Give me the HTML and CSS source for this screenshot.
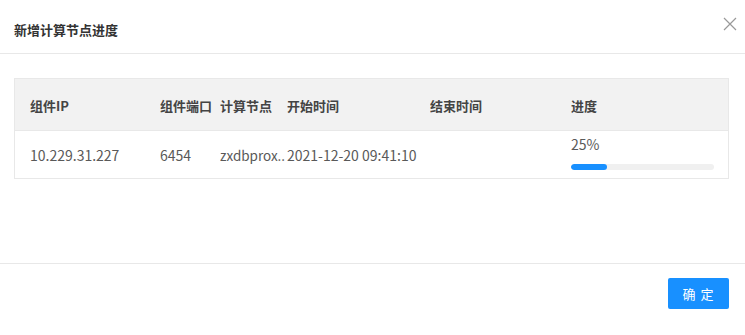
FILE: index.html
```html
<!DOCTYPE html>
<html lang="zh-CN">
<head>
  <meta charset="UTF-8">
  <meta name="viewport" content="width=device-width, initial-scale=1.0">
  <title>新增计算节点进度</title>
  <link rel="stylesheet" href="styles.css">
</head>
<body>
  <div class="dialog">
    <div class="dialog-header">
      <span class="dialog-title">新增计算节点进度</span>
      <button class="close" aria-label="close">
        <svg width="14" height="14" viewBox="0 0 14 14">
          <path d="M1 1 L13 13 M13 1 L1 13" stroke="#999" stroke-width="1.2" fill="none"/>
        </svg>
      </button>
    </div>
    <div class="dialog-body">
      <div class="table">
        <div class="tr thead">
          <div class="td c1">组件IP</div>
          <div class="td c2">组件端口</div>
          <div class="td c3">计算节点</div>
          <div class="td c4">开始时间</div>
          <div class="td c5">结束时间</div>
          <div class="td c6">进度</div>
        </div>
        <div class="tr tbody">
          <div class="td c1">10.229.31.227</div>
          <div class="td c2">6454</div>
          <div class="td c3">zxdbprox..</div>
          <div class="td c4">2021-12-20 09:41:10</div>
          <div class="td c5"></div>
          <div class="td c6 progress">
            <div class="percent">25%</div>
            <div class="bar"><div class="bar-fill" style="width: 25%"></div></div>
          </div>
        </div>
      </div>
    </div>
    <div class="dialog-footer">
      <button class="btn-primary">确 定</button>
    </div>
  </div>
</body>
</html>
```

FILE: styles.css
```css
body {
  margin: 0;
  font-family: "Noto Sans CJK SC", "Noto Sans", sans-serif;
  font-size: 13px;
  color: #555;
  background: #fff;
}

.dialog {
  width: 745px;
  height: 335px;
}

.dialog-header {
  height: 54px;
  display: flex;
  align-items: center;
  justify-content: space-between;
  padding: 0 8px 0 14px;
  border-bottom: 1px solid #e8e8e8;
  box-sizing: border-box;
}

.dialog-title {
  font-size: 13px;
  font-weight: bold;
  color: #333;
  margin-top: 6px;
}

.close {
  border: none;
  background: none;
  padding: 0;
  width: 14px;
  height: 14px;
  margin-bottom: 5px;
  cursor: pointer;
}

.dialog-body {
  padding: 24px 16px 0 14px;
  height: 210px;
  box-sizing: border-box;
  border-bottom: 1px solid #e8e8e8;
}

.table {
  border: 1px solid #e8e8e8;
}

.tr {
  display: grid;
  grid-template-columns: 145px 60px 67px 143px 141px 1fr;
  align-items: center;
  height: 47px;
}

.thead {
  height: 51px;
  background: #f2f2f2;
  border-bottom: 1px solid #e8e8e8;
  font-weight: bold;
  color: #444;
}

.tbody {
  font-size: 14px;
  color: #595959;
}

.td {
  white-space: nowrap;
  overflow: hidden;
}

.c1 {
  padding-left: 15px;
}

.thead .td {
  padding-top: 1px;
}

.tbody .c3 {
  font-size: 13.5px;
}

.progress {
  align-self: stretch;
  padding-top: 3px;
}

.percent {
  line-height: 20px;
}

.bar {
  width: 143px;
  height: 6px;
  background: #f0f0f0;
  border-radius: 3px;
  margin-top: 10px;
  overflow: hidden;
}

.bar-fill {
  height: 100%;
  background: #1890ff;
  border-radius: 3px;
}

.dialog-footer {
  display: flex;
  justify-content: flex-end;
  padding: 14px 16px 0 0;
}

.btn-primary {
  width: 61px;
  height: 31px;
  border: none;
  border-radius: 2px;
  background: #1890ff;
  color: #fff;
  font-family: "Noto Sans CJK SC", sans-serif;
  font-size: 13px;
  letter-spacing: 1px;
}
```
